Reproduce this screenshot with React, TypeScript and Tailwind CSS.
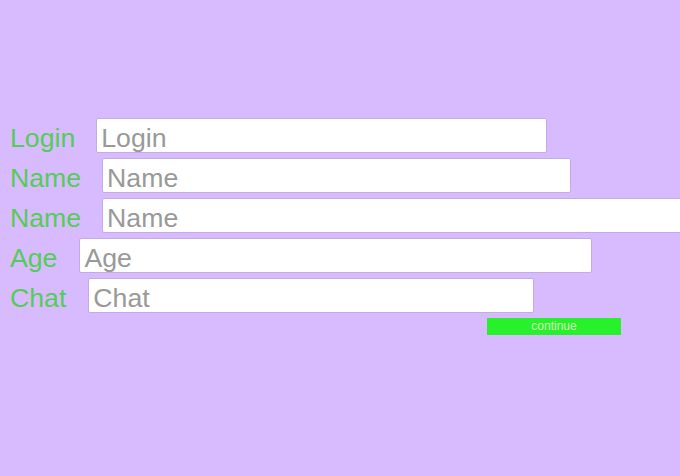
import { useState } from 'react';

const fields = [
  { label: 'Login', width: 'w-[451px]', gap: 'gap-[21px]' },
  { label: 'Name', width: 'w-[469px]', gap: 'gap-[21px]' },
  { label: 'Name', width: 'w-[600px]', gap: 'gap-[21px]' },
  { label: 'Age', width: 'w-[513px]', gap: 'gap-[22px]' },
  { label: 'Chat', width: 'w-[446px]', gap: 'gap-[22px]' },
];

export default function App() {
  const [values, setValues] = useState<string[]>(fields.map(() => ''));

  return (
    <div className="w-full h-[476px] overflow-hidden bg-[#d8bbff] pt-[118px] pl-[10px] font-['Liberation_Sans',Arial,sans-serif]">
      {/* Form rows */}
      <div className="flex flex-col gap-[5px]">
        {fields.map((f, i) => (
          <div key={i} className={`flex items-center ${f.gap} h-[35px] whitespace-nowrap`}>
            <label className="pt-[6px] text-[26.67px] leading-none text-[#55cc55] shrink-0">{f.label}</label>
            <input
              type="text"
              value={values[i]}
              onChange={(e) => setValues(values.map((v, j) => (j === i ? e.target.value : v)))}
              placeholder={f.label}
              className={`${f.width} shrink-0 h-[35px] bg-white border border-[#c2ace6] rounded-[2px] pl-[4px] pt-[5px] pb-0 text-[26.67px] leading-none text-gray-700 placeholder:text-[#999999] outline-none`}
            />
          </div>
        ))}
      </div>

      <button className="block mt-[5px] ml-[477px] w-[134px] h-[17px] bg-[#29f02c] text-[12px] leading-[17px] text-[#d0f4b8]">
        continue
      </button>
    </div>
  );
}
